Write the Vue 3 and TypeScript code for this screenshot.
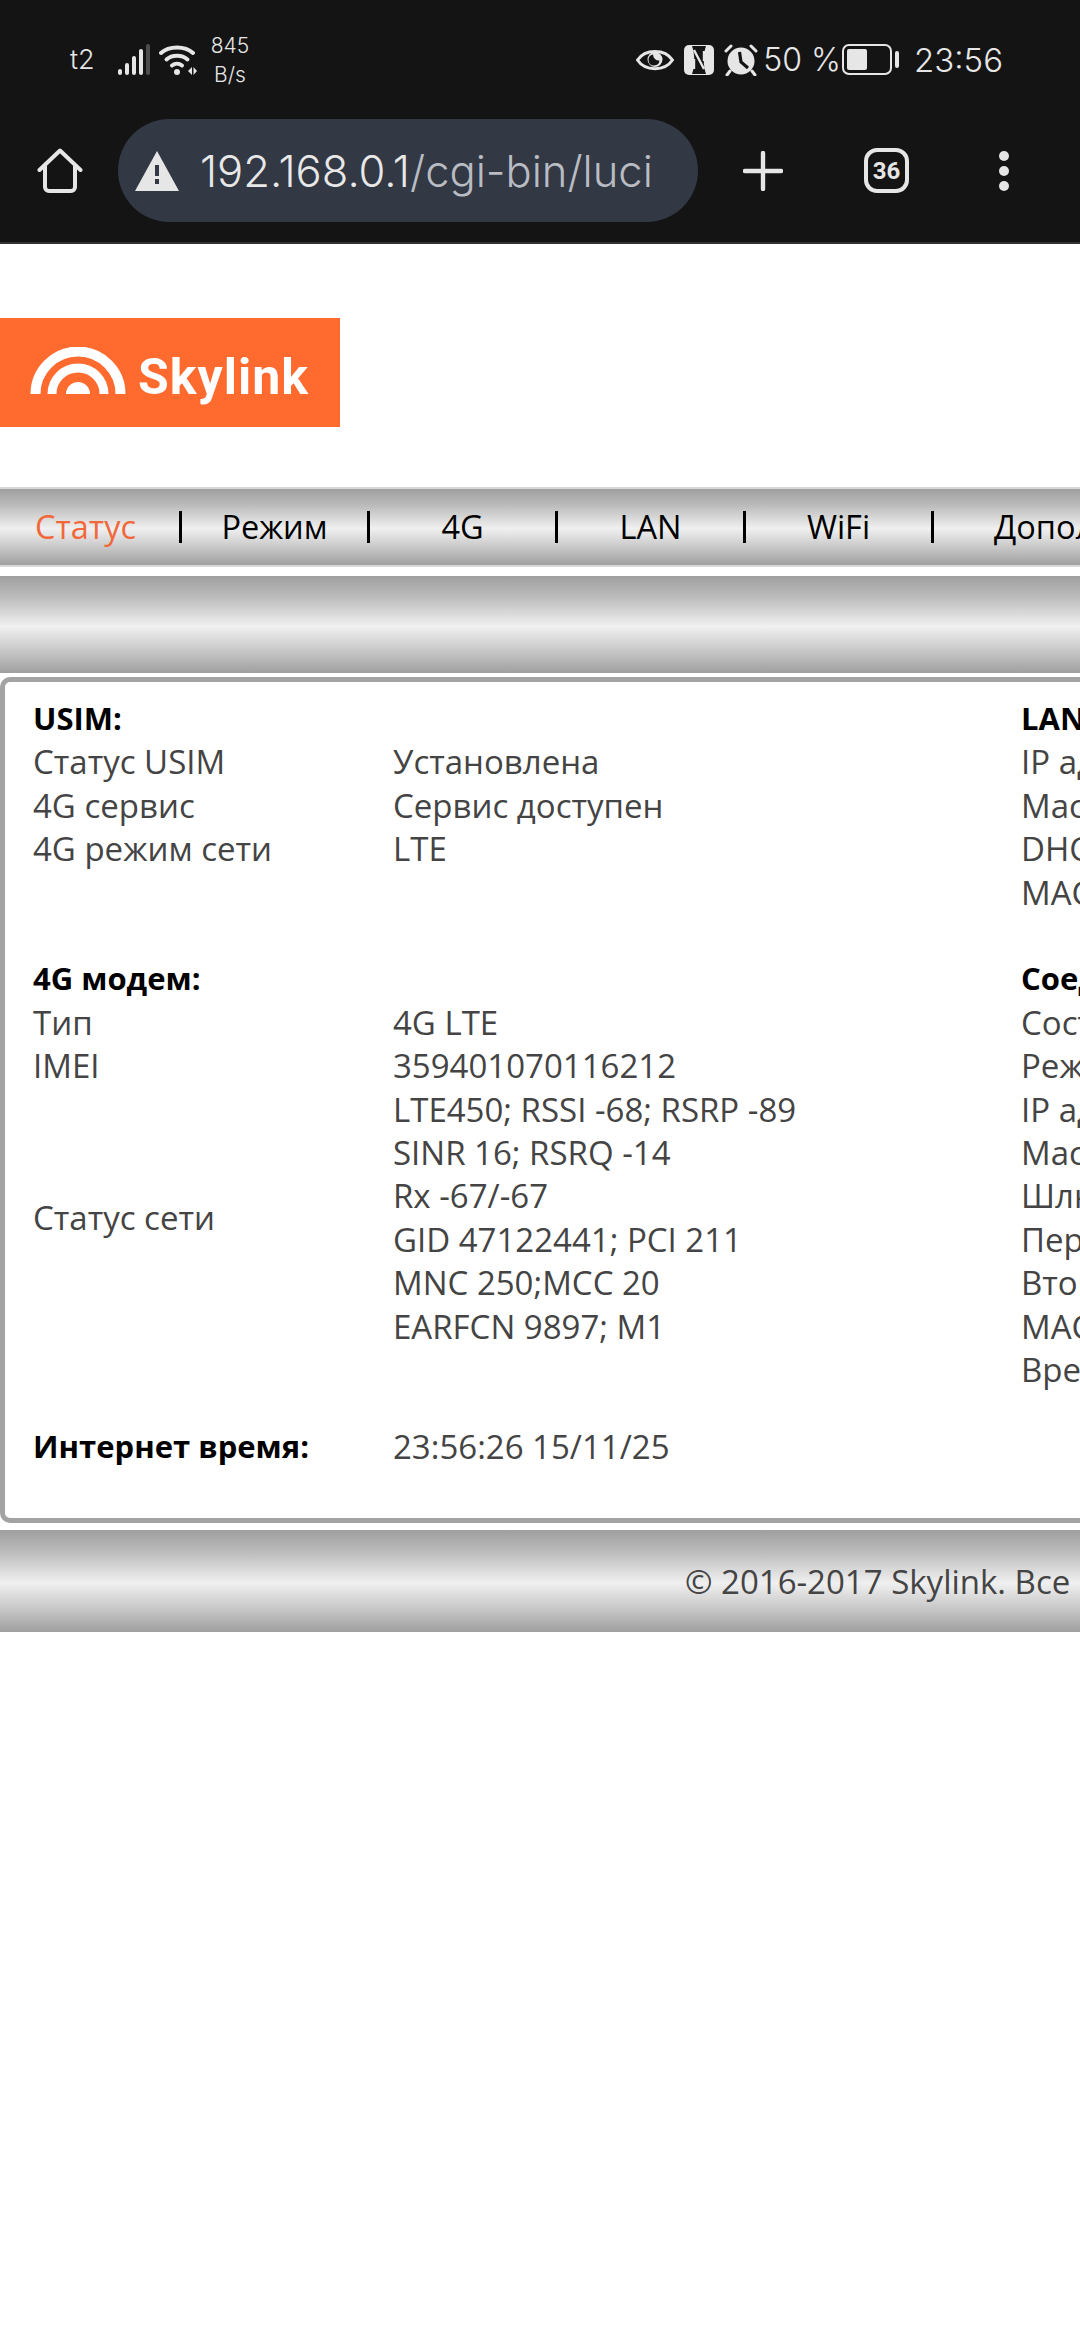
<script setup lang="ts">
interface Row {
  label: string
  value: string
}

const navItems = ['Статус', 'Режим', '4G', 'LAN', 'WiFi', 'Дополнительно']

const usimRows: Row[] = [
  { label: 'Статус USIM', value: 'Установлена' },
  { label: '4G сервис', value: 'Сервис доступен' },
  { label: '4G режим сети', value: 'LTE' },
]

const networkLines = [
  'LTE450; RSSI -68; RSRP -89',
  'SINR 16; RSRQ -14',
  'Rx -67/-67',
  'GID 47122441; PCI 211',
  'MNC 250;MCC 20',
  'EARFCN 9897; M1',
]

const lanLines = ['IP адрес', 'Маска подсети', 'DHCP сервер', 'MAC адрес']
const connLines = [
  'Состояние',
  'Режим',
  'IP адрес',
  'Маска подсети',
  'Шлюз',
  'Первичный DNS',
  'Вторичный DNS',
  'MAC адрес',
  'Время',
]
</script>

<template>
  <div class="screen">
    <header class="chrome">
      <div class="status-bar">
        <div class="status-left">
          <span class="carrier">t2</span>
          <svg class="signal" width="32" height="32" viewBox="0 0 32 32">
            <rect x="0" y="25" width="4" height="6" rx="2" fill="#e6e6e6" />
            <rect x="7" y="19" width="4" height="12" rx="2" fill="#e6e6e6" />
            <rect x="14" y="12" width="4" height="19" rx="2" fill="#e6e6e6" />
            <rect x="21" y="5" width="4" height="26" rx="2" fill="#e6e6e6" />
            <rect x="28" y="0" width="4" height="31" rx="2" fill="#4d4d4d" />
          </svg>
          <svg class="wifi" width="38" height="32" viewBox="0 0 38 32">
            <g fill="none" stroke="#e6e6e6" stroke-width="4" stroke-linecap="round">
              <path d="M2 9 C 10 1.5, 26 1.5, 34 9" />
              <path d="M7.5 15.5 C 13 10.5, 23 10.5, 28.5 15.5" />
              <path d="M13 21.5 C 16 19, 20 19, 23 21.5" />
            </g>
            <circle cx="18" cy="28" r="3" fill="#e6e6e6" />
            <path d="M29 27 L33 23 V31 Z M34.5 23 L38 27 L34.5 31 Z" fill="#e6e6e6" />
          </svg>
          <div class="speed">
            <span>845</span>
            <span>B/s</span>
          </div>
        </div>
        <div class="status-right">
          <svg width="38" height="26" viewBox="0 0 38 26">
            <path d="M1.5 13 C 9 1.5, 29 1.5, 36.5 13 C 29 24.5, 9 24.5, 1.5 13 Z" fill="none" stroke="#e6e6e6" stroke-width="3" />
            <circle cx="19" cy="12.5" r="7.5" fill="#e6e6e6" />
            <path d="M17 7.5 a5.5 5.5 0 1 0 6.5 6 a6 6 0 0 1 -6.5 -6 Z" fill="#141415" />
          </svg>
          <svg width="30" height="30" viewBox="0 0 30 30">
            <rect x="0" y="0" width="30" height="30" rx="5" fill="#e6e6e6" />
            <path d="M8 1 C 11 9, 11 21, 8 29 H22 C 19 21, 19 9, 22 1 Z" fill="#141415" />
            <path d="M10 5 L20 24 M20 6 V16 M10 14 V24" fill="none" stroke="#e6e6e6" stroke-width="2.4" />
          </svg>
          <svg width="34" height="32" viewBox="0 0 34 32">
            <circle cx="17" cy="17" r="13.5" fill="#e6e6e6" />
            <path d="M15.5 8 L17 18 L24 24" fill="none" stroke="#141415" stroke-width="3.2" />
            <path d="M2 7 L7 2 M32 7 L27 2 M6 27 L3 31 M28 27 L31 31" stroke="#e6e6e6" stroke-width="3" stroke-linecap="round" />
          </svg>
          <span class="battery-text">50 %</span>
          <div class="battery">
            <div class="battery-body"><div class="battery-fill"></div></div>
            <div class="battery-nub"></div>
          </div>
          <span class="clock">23:56</span>
        </div>
      </div>
      <div class="toolbar">
        <svg class="home" width="46" height="46" viewBox="0 0 46 46">
          <path d="M2.5 22 L23 2.5 L43.5 22 M8 18 V39 a4 4 0 0 0 4 4 H34 a4 4 0 0 0 4 -4 V18" fill="none" stroke="#e6e6e6" stroke-width="4" stroke-linejoin="round" stroke-linecap="round" />
        </svg>
        <div class="url-pill">
          <svg width="46" height="42" viewBox="0 0 46 42">
            <path d="M23 1 L45 41 H1 Z" fill="#e6e6e6" />
            <rect x="21" y="15" width="4" height="11" fill="#323844" />
            <rect x="21" y="29" width="4" height="5" fill="#323844" />
          </svg>
          <span class="url"><span class="url-host">192.168.0.1</span>/cgi-bin/luci</span>
        </div>
        <svg class="plus" width="40" height="40" viewBox="0 0 40 40">
          <path d="M20 2 V38 M2 20 H38" stroke="#e6e6e6" stroke-width="4.4" stroke-linecap="round" />
        </svg>
        <div class="tabs">36</div>
        <div class="dots">
          <span></span>
          <span></span>
          <span></span>
        </div>
      </div>
    </header>

    <div class="logo-area">
      <div class="logo">
        <svg width="96" height="48" viewBox="0 0 96 48">
          <path d="M5.5 47 a42.5 42.5 0 0 1 85 0" fill="none" stroke="#fff" stroke-width="10" />
          <path d="M22 47 a26 26 0 0 1 52 0" fill="none" stroke="#fff" stroke-width="9" />
          <path d="M36 47 a12 12 0 0 1 24 0 Z" fill="#fff" />
        </svg>
        <span class="logo-text">Skylink</span>
      </div>
    </div>

    <nav class="nav bar">
      <div v-for="(item, i) in navItems" :key="item" class="nav-item" :class="{ active: i === 0, last: i === navItems.length - 1 }">
        {{ item }}
      </div>
    </nav>

    <div class="subbar bar"></div>

    <main class="box">
      <div class="col-left">
        <section>
          <div class="title">USIM:</div>
          <div v-for="row in usimRows" :key="row.label" class="row">
            <span>{{ row.label }}</span>
            <span>{{ row.value }}</span>
          </div>
        </section>
        <section class="modem">
          <div class="title">4G модем:</div>
          <div class="row">
            <span>Тип</span>
            <span>4G LTE</span>
          </div>
          <div class="row">
            <span>IMEI</span>
            <span>359401070116212</span>
          </div>
          <div class="row">
            <span class="mid">Статус сети</span>
            <div>
              <div v-for="line in networkLines" :key="line">{{ line }}</div>
            </div>
          </div>
        </section>
        <section class="inet">
          <div class="row">
            <span class="title">Интернет время:</span>
            <span>23:56:26 15/11/25</span>
          </div>
        </section>
      </div>
      <div class="col-right">
        <section>
          <div class="title">LAN:</div>
          <div v-for="line in lanLines" :key="line">{{ line }}</div>
        </section>
        <section class="conn">
          <div class="title">Соединение:</div>
          <div v-for="line in connLines" :key="line">{{ line }}</div>
        </section>
      </div>
    </main>

    <footer class="footer bar">© 2016-2017 Skylink. Все права защищены</footer>
  </div>
</template>

<style scoped>
.screen {
  width: 1080px;
  height: 2340px;
  overflow: hidden;
  background: #fff;
  font-family: Inter, "Noto Sans", sans-serif;
  color: #444;
}

.chrome {
  height: 244px;
  background: #141415;
  border-bottom: 2px solid #333;
  box-sizing: border-box;
  color: #e6e6e6;
}

.status-bar {
  height: 119px;
  display: flex;
  align-items: center;
  justify-content: space-between;
  padding: 0 77px 0 70px;
}

.status-left,
.status-right {
  display: flex;
  align-items: center;
}

.carrier {
  font-size: 27px;
  font-weight: 300;
  margin-right: 23px;
}

.signal {
  margin-right: 9px;
}

.speed {
  display: flex;
  flex-direction: column;
  align-items: center;
  font-size: 21px;
  font-weight: 300;
  line-height: 29px;
  margin-left: 14px;
}

.status-right {
  gap: 10px;
}

.battery-text {
  font-size: 32px;
  font-weight: 300;
  margin-left: -5px;
}

.battery {
  display: flex;
  align-items: center;
  gap: 3px;
  margin-left: -9px;
}

.battery-body {
  width: 50px;
  height: 31px;
  box-sizing: border-box;
  border: 2px solid #e6e6e6;
  border-radius: 7px;
  padding: 3px;
}

.battery-fill {
  width: 20px;
  height: 100%;
  background: #e6e6e6;
  border-radius: 2px;
}

.battery-nub {
  width: 4px;
  height: 17px;
  background: #e6e6e6;
  border-radius: 2px;
}

.clock {
  font-size: 33px;
  font-weight: 300;
  margin-left: 5px;
}

.toolbar {
  height: 103px;
  display: flex;
  align-items: center;
  padding-left: 37px;
}

.home {
  margin-right: 35px;
}

.url-pill {
  width: 580px;
  height: 103px;
  border-radius: 52px;
  background: #323844;
  display: flex;
  align-items: center;
  gap: 20px;
  padding-left: 16px;
  box-sizing: border-box;
  margin-right: 45px;
}

.url {
  font-size: 43.5px;
  font-weight: 300;
  color: #b9bcc2;
  white-space: nowrap;
}

.url-host {
  color: #e8e8e8;
}

.tabs {
  width: 45px;
  height: 45px;
  box-sizing: border-box;
  border: 4px solid #e6e6e6;
  border-radius: 13px;
  margin-left: 81px;
  font-family: Roboto, sans-serif;
  font-size: 24px;
  font-weight: 700;
  display: flex;
  align-items: center;
  justify-content: center;
}

.dots {
  display: flex;
  flex-direction: column;
  gap: 5px;
  margin-left: 90px;
}

.dots span {
  width: 10px;
  height: 10px;
  border-radius: 50%;
  background: #e6e6e6;
}

.logo-area {
  height: 243px;
  padding-top: 74px;
  box-sizing: border-box;
}

.logo {
  width: 340px;
  height: 109px;
  background: #ff6a2e;
  display: flex;
  align-items: center;
  padding-left: 30px;
  box-sizing: border-box;
  gap: 12px;
  filter: blur(0.6px);
}

.logo svg {
  margin-top: -4px;
}

.logo-text {
  font-size: 50px;
  font-weight: 700;
  letter-spacing: 1px;
  margin-top: 8px;
  color: #fff;
  font-family: Roboto, sans-serif;
}

.bar {
  background: linear-gradient(to bottom, #9f9f9f 0%, #bcbcbc 22%, #f0f0f0 52%, #c6c6c6 78%, #9f9f9f 100%);
}

.nav {
  height: 80px;
  display: flex;
  align-items: center;
  white-space: nowrap;
  color: #000;
  font-family: "Open Sans", sans-serif;
  font-size: 32.5px;
  border-top: 2px solid #d8d8d8;
  border-bottom: 2px solid #d8d8d8;
  box-sizing: border-box;
}

.nav-item {
  width: 188px;
  flex: none;
  height: 32px;
  line-height: 32px;
  text-align: center;
  border-right: 3px solid #000;
  box-sizing: border-box;
}

.nav-item.active {
  width: 182px;
  padding-right: 8px;
  color: #f2683a;
}

.nav-item.last {
  border-right: none;
  text-align: left;
  padding-left: 60px;
  width: auto;
}

.subbar {
  height: 97px;
  margin-top: 9px;
}

.box {
  width: 1700px;
  margin-top: 4px;
  box-sizing: border-box;
  border: 5px solid #a3a3a3;
  border-radius: 10px;
  padding: 15px 28px 50px;
  display: flex;
  font-family: "Open Sans", sans-serif;
  font-size: 33px;
  line-height: 43.4px;
}

.col-left {
  width: 988px;
  flex: none;
}

.title {
  font-size: 31px;
  font-weight: 700;
  color: #000;
}

.row {
  display: grid;
  grid-template-columns: 360px 1fr;
}

.mid {
  align-self: center;
}

.modem {
  margin-top: 86.8px;
}

.conn {
  margin-top: 43.4px;
}

.inet {
  margin-top: 76.6px;
}

.footer {
  height: 102px;
  margin-top: 7px;
  display: flex;
  align-items: center;
  padding-left: 685px;
  font-family: "Open Sans", sans-serif;
  font-size: 33px;
  white-space: nowrap;
}
</style>

<style>
body {
  margin: 0;
}
</style>
